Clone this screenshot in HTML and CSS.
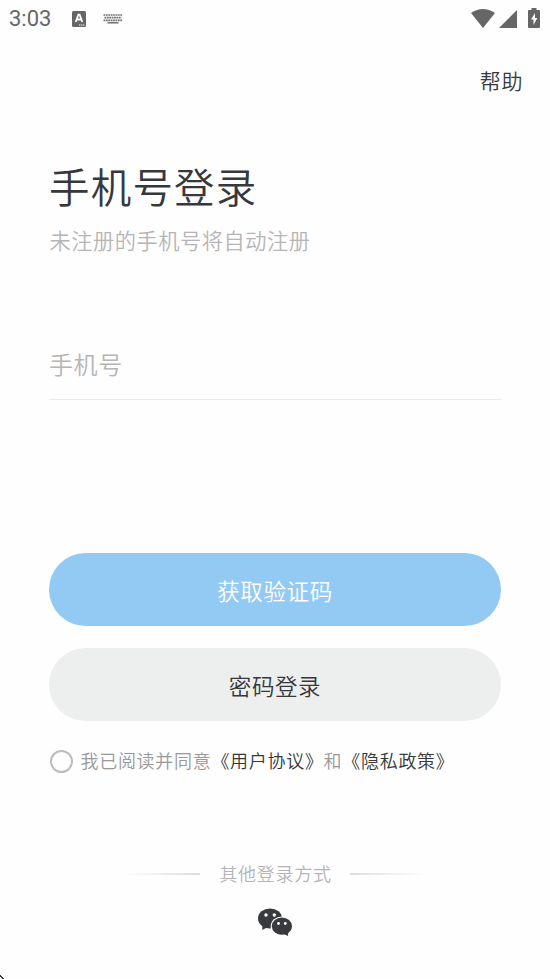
FILE: index.html
```html
<!DOCTYPE html>
<html lang="zh-CN">
<head>
<meta charset="utf-8">
<title>手机号登录</title>
<link rel="stylesheet" href="styles.css">
</head>
<body>
<header class="status">
  <span class="time">3:03</span>
  <svg class="ic-a" width="14" height="16" viewBox="0 0 14 16"><rect width="14" height="16" rx="1.5" fill="#666"/><path d="M3.7 11 6.4 3.6h1.2L10.3 11M4.8 8.5h4.4" fill="none" stroke="#fff" stroke-width="1.8"/><path d="M7 14h6" stroke="#fff" stroke-width="1" stroke-dasharray="1.3 .6"/></svg>
  <svg class="ic-k" width="20" height="10" viewBox="0 0 20 10"><path d="M.5 1h19M1.5 3.7h17M.5 6.3h19" stroke="#707070" stroke-width="1.7" stroke-dasharray="1.8 .6"/><path d="M4.5 8.8h11" stroke="#707070" stroke-width="1.5"/></svg>
  <svg class="ic-wifi" width="24" height="19" viewBox="0 0 24 19"><path d="M0 4Q12-4 24 4L12 19Z" fill="#666"/></svg>
  <svg class="ic-sig" width="18" height="18" viewBox="0 0 18 18"><path d="M18 0v18H0Z" fill="#666"/></svg>
  <svg class="ic-bat" width="12" height="20" viewBox="0 0 12 20"><path d="M3.500 0h5v2H11q1 0 1 1v16q0 1-1 1H1q-1 0-1-1V3q0-1 1-1h2.500Z" fill="#666"/><path d="M7 5 3 11.500h2.500V17l3.800-7H7Z" fill="#fff"/></svg>
</header>
<nav class="nav"><a class="help">帮助</a></nav>
<main class="main">
  <h1 class="title">手机号登录</h1>
  <p class="sub">未注册的手机号将自动注册</p>
  <div class="field">手机号</div>
  <div class="btn primary">获取验证码</div>
  <div class="btn secondary">密码登录</div>
  <div class="terms"><span class="radio"></span><span class="label">我已阅读并同意<b>《用户协议》</b>和<b>《隐私政策》</b></span></div>
</main>
<footer class="other">
  <div class="divider"><i class="line left"></i><span>其他登录方式</span><i class="line right"></i></div>
  <svg class="wechat" width="34" height="28" viewBox="0 0 34 28"><g fill="#383a3f"><ellipse cx="12" cy="10.400" rx="12" ry="10"/><path d="M4.500 16 4.200 22 10 19Z"/></g><ellipse cx="23.900" cy="18.200" rx="11.200" ry="9.700" fill="#fefefe"/><g fill="#383a3f"><ellipse cx="23.900" cy="18.200" rx="10.100" ry="8.600"/><path d="M30.500 23 29.800 28 25 25.500Z"/></g><g fill="#fff"><circle cx="8" cy="7" r="1.700"/><circle cx="16.300" cy="7" r="1.700"/><circle cx="20.500" cy="15.500" r="1.400"/><circle cx="27.300" cy="15.500" r="1.400"/></g></svg>
</footer>
<svg class="corner" width="4" height="4" viewBox="0 0 4 4"><path d="M0 0h1v1h1v1h1v1h1v1H2V3H1V2H0Z" fill="#333"/></svg>
</body>
</html>
```
FILE: styles.css
```css
* { box-sizing: border-box; }
body {
  margin: 0;
  height: 979px;
  position: relative;
  overflow: hidden;
  background: #fefefe;
  color: #36383c;
  font-family: "Noto Sans CJK SC", sans-serif;
  font-weight: 350;
}
svg { display: block; flex: none; }
.status { display: flex; height: 38px; padding: 0 10px 0 9px; align-items: center; }
.status svg { margin-top: -1px; }
.time { width: 63px; font: 22px/38px Roboto, sans-serif; color: #666; }
.status .ic-k { margin-left: 17px; }
.status .ic-wifi { margin-left: auto; }
.status .ic-sig { margin-left: 4px; }
.status .ic-bat { margin-left: 11px; margin-top: -2px; }
.nav { display: flex; justify-content: flex-end; padding: 26px 27px 0 0; height: 119px; }
.help { font-size: 21px; line-height: 32px; letter-spacing: .6px; }
.main { padding: 0 49px; }
.title { margin: 0; font-size: 40.500px; font-weight: 350; line-height: 57px; letter-spacing: 1.200px; }
.sub { margin: 11px 0 0 .5px; font-size: 21.200px; line-height: 30px; letter-spacing: .57px; color: #b5b5b5; }
.field {
  height: 72px;
  margin-top: 73px;
  border-bottom: 1px solid #ebebeb;
  font-size: 24px;
  line-height: 72px;
  letter-spacing: .6px;
  color: #b5b5b5;
}
.btn { height: 73px; border-radius: 37px; text-align: center; font-size: 22.500px; line-height: 74px; letter-spacing: .6px; }
.primary { margin-top: 153px; background: #92caf4; color: #fff; }
.secondary { margin-top: 22px; background: #edefee; }
.terms { display: flex; align-items: center; height: 28px; margin-top: 26px; font-size: 18px; line-height: 26px; letter-spacing: .7px; color: #999; white-space: nowrap; }
.label { padding-bottom: 2px; }
.terms b { font-weight: 350; color: #36383c; }
.radio { width: 23px; height: 23px; margin: 0 8px 0 .5px; border: 2px solid #bcbcbc; border-radius: 50%; }
.other { display: flex; flex-direction: column; align-items: center; padding-top: 85px; }
.divider { display: flex; align-items: center; height: 28px; font-size: 18px; line-height: 26px; letter-spacing: .7px; color: #b5b5b5; }
.divider span { padding-bottom: 2px; }
.line { width: 75px; height: 2px; }
.left { margin-right: 19px; background: linear-gradient(90deg, #fefefe, #ddd); }
.right { margin-left: 18px; background: linear-gradient(90deg, #ddd, #fefefe); }
.wechat { margin-top: 20px; }
.corner { position: absolute; left: 0; bottom: 0; }
```
